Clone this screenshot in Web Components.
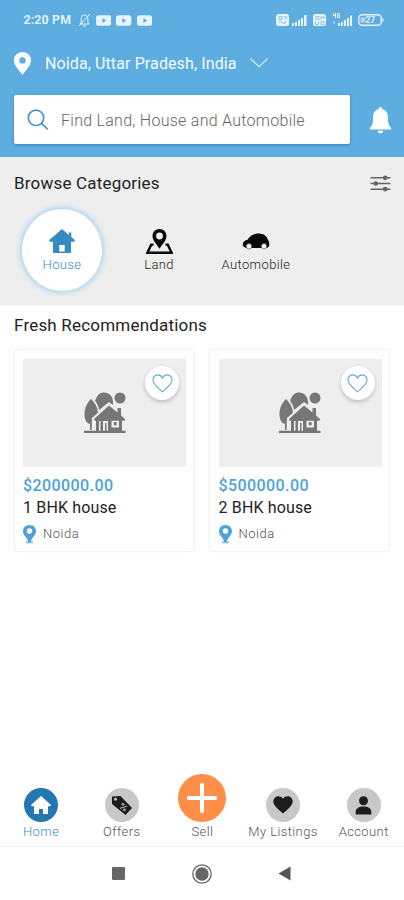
<!DOCTYPE html>
<html lang="en">
<head>
<meta charset="utf-8">
<title>Marketplace</title>
<style>
html,body{margin:0;padding:0;background:#fff}
body{font-family:Roboto,"Liberation Sans",sans-serif;width:404px;height:900px;overflow:hidden}
</style>
</head>
<body>
<market-app></market-app>
<script>
const define = (name, css, html) => customElements.define(name, class extends HTMLElement {
  constructor() {
    super();
    const view = typeof html === 'function' ? html(this) : html;
    this.attachShadow({mode: 'open'}).innerHTML = `<style>*{box-sizing:border-box}svg{display:block;flex:none}${css}</style>${view}`;
  }
});

const icons = {
  house: ['0 0 26 24', '<path fill="currentColor" fill-rule="evenodd" d="M13 0 0 11.200l1 1.500H4V24h18V12.700h3L26 11.200l-3.700-3.200V3.500h-2.300v2.600zM10.300 16h5.400v6.500h-5.400z"/>'],
  land: ['0 0 26 24', '<path fill="currentColor" fill-rule="evenodd" d="M13 0C9 0 6.300 2.900 6.300 6.600 6.300 11 10 14 13 19c3-5 6.700-8 6.700-12.400C19.700 2.900 17 0 13 0zm0 3.400a3.300 3.300 0 1 1 0 6.600 3.300 3.300 0 0 1 0-6.600z"/><path d="M7.300 15H5L1.400 22.800h23.200L21 15h-2.300" fill="none" stroke="currentColor" stroke-width="2.300"/>'],
  car: ['0 0 28 17', '<path fill="currentColor" d="M.8 11.500C1 8.500 3 7.300 5.500 6.800 8 3 11 .6 16 .6c5.500 0 8.400 2 10 6.400 1.300 1.200 1.500 4 1 6.500l-2 1.500H4L.8 13z"/><circle cx="7" cy="13.300" r="2.700" fill="#f4f4f4" stroke="#333" stroke-width=".5"/><circle cx="22" cy="13.300" r="2.700" fill="#f4f4f4" stroke="#333" stroke-width=".5"/>'],
  tag: ['0 0 22 22', '<path fill="currentColor" fill-rule="evenodd" d="M1 1.500 9.500 1 21 13.500 14.500 21 1 9.500zm3.500 1.400a1.500 1.500 0 1 0 0 3 1.500 1.500 0 0 0 0-3z"/><path d="m9 14 7-2.500" stroke="#aaa" stroke-width="1.300" fill="none"/><circle cx="12" cy="9.700" r="1.400" fill="#aaa"/><circle cx="13.400" cy="15.500" r="1.400" fill="#aaa"/>'],
  heart: ['0 0 20 18', '<path fill="currentColor" d="M10 17.600C5.500 13.500.3 9.800.3 5.600.3.200 7-1.700 10 2.700 13-1.700 19.700.2 19.700 5.600c0 4.200-5.200 7.900-9.700 12z"/>'],
  home: ['0 0 20 18', '<path fill="currentColor" d="M10 0 0 9l.8 1.300H3V18h5v-5h4v5h5v-7.700h2.200L20 9z"/>'],
  person: ['0 0 18 20', '<circle cx="9" cy="5" r="4.700" fill="currentColor"/><path fill="currentColor" d="M.7 19.500v-2.700C.7 13 4 11 9 11s8.300 2 8.300 5.800v2.700z"/>'],
  plus: ['0 0 28 28', '<path d="M14 1.800v24.400M1.800 14h24.400" stroke="currentColor" stroke-width="3.800" stroke-linecap="round"/>']
};

define('ui-icon', ':host{display:block;flex:none}', el => {
  const [box, body] = icons[el.getAttribute('name')];
  return `<svg width="${el.getAttribute('w')}" height="${el.getAttribute('h')}" viewBox="${box}" preserveAspectRatio="none">${body}</svg>`;
});

define('status-bar', `
:host{display:flex;height:40px;padding:0 20px 0 23.500px;align-items:center;color:#e6f4fd}
time{font-size:12.300px;font-weight:600;letter-spacing:.22px;width:54.500px;white-space:nowrap}
.l,.r{display:flex;align-items:center}.l{gap:5px}.r{margin-left:auto;gap:2px}`, `
<time>2:20 PM</time>
<div class="l">
<svg width="13" height="14" viewBox="0 0 13 14" fill="none" stroke="currentColor" stroke-width="1"><path d="M2 11h9L9.800 9V6c0-2.500-1.200-4-3.300-4S3.200 3.500 3.200 6v3zM5 12.800h3M1 13 12 1"/></svg>
${'<svg width="15.300" height="11" viewBox="0 0 16 11"><path fill="currentColor" fill-rule="evenodd" d="M3 0h10q3 0 3 3v5q0 3-3 3H3Q0 11 0 8V3q0-3 3-3zm3.700 3v5l4-2.500z"/></svg>'.repeat(3)}
</div>
<div class="r">
<svg width="13" height="12" viewBox="0 0 13 12"><rect width="13" height="12" rx="2.500" fill="currentColor"/><path d="M3 2.500h3v3H3zM8 2l2 3 1-3M2.500 8.500q2-2 3.500 0T10 8M8 10l2-3" stroke="#8cc5ea" fill="none"/></svg>
<svg width="17" height="12" viewBox="0 0 17 12" fill="currentColor"><path d="M1 9h2v3H1zM4 8h2v4H4zM7 6h2v6H7zM10 4h2v8h-2zM13 1h2.500v11H13z"/></svg>
<svg width="13" height="12" viewBox="0 0 13 12" style="margin-left:3px"><rect width="13" height="12" rx="2.500" fill="currentColor"/><path d="M3 2.500h3v3H3zM8 2v3l3-3v3M2.500 7.500v3h3v-3M8 7.500h3v3H8z" stroke="#8cc5ea" fill="none"/></svg>
<svg width="22" height="14" viewBox="0 0 22 14" fill="currentColor" style="margin-left:4px"><path d="M1 0v3h2v2h1V0H3v2H2V0zM5 0v5h3V2H6.700v1H7v1H6V1h2V0z"/><path d="M1 9l2-2v4H2z" opacity=".5"/><path d="M6 10h2v3H6zM9 9h2v4H9zM12 7h2v6h-2zM15 5h2v8h-2zM18 2.500h2V13h-2z"/></svg>
<svg width="26" height="12" viewBox="0 0 26 12" style="margin-left:2px"><rect x=".7" y=".7" width="22.600" height="10.600" rx="3.500" fill="none" stroke="currentColor" stroke-width="1.400"/><path d="M24.500 3.500v5l1.500-2.500z" fill="currentColor"/><path d="M2.500 3.500h5v5h-5z" fill="currentColor" opacity=".6"/><text x="7.500" y="9.200" font-size="8.500" font-weight="600" fill="currentColor" font-family="Roboto,sans-serif">27</text></svg>
</div>`);

define('location-row', `
:host{display:flex;align-items:center;height:46px;padding-left:14px;color:#f4faff;font-size:16px}
span{margin-left:14px;width:192px;white-space:nowrap;letter-spacing:.11px}
.c{margin-left:13px}`, `
<svg width="17" height="23" viewBox="0 0 17 23"><path fill="#fff" fill-rule="evenodd" d="M8.500 0C3.500 0 0 3.700 0 8.400 0 14 5.500 18 8.500 23 11.500 18 17 14 17 8.400 17 3.700 13.500 0 8.500 0zm0 5.200a3.200 3.200 0 1 1 0 6.400 3.200 3.200 0 0 1 0-6.400z"/></svg>
<span><slot></slot></span>
<svg class="c" width="18" height="10" viewBox="0 0 18 10" fill="none" stroke="#d5ecfa" stroke-width="1.200"><path d="m.5.7 8.500 8 8.500-8"/></svg>`);

define('search-row', `
:host{display:flex;align-items:center;padding:9px 12px 0 14px}
.box{display:flex;align-items:center;width:336px;height:49px;background:#fff;border-radius:2px;box-shadow:0 1px 3px #1c5f8e88;padding-left:13px;color:#666;font-size:16px;font-weight:300}
.box span{margin-left:12px;margin-top:1px;white-space:nowrap;letter-spacing:.27px}
.bell{margin-left:auto;margin-top:2px}`, `
<div class="box"><svg width="22" height="22" viewBox="0 0 22 22" fill="none" stroke="#4a96c8" stroke-width="1.700"><circle cx="9" cy="8.800" r="7.700"/><path d="m14.500 14.300 6.300 6"/></svg><span><slot></slot></span></div>
<svg class="bell" width="23" height="27" viewBox="0 0 23 28" fill="#fff"><path d="M11.500 0c1.200 0 1.800.9 1.800 2.100 4 .9 5.900 4.400 5.900 8.400 0 6.500 1 8.800 3.300 11v1.800H.5v-1.800c2.300-2.200 3.300-4.500 3.300-11 0-4 1.900-7.500 5.900-8.400C9.700.9 10.300 0 11.500 0zM8.700 24.500h5.600c0 3.700-5.600 3.700-5.600 0z"/></svg>`);

define('category-item', `
:host{display:flex;flex-direction:column;align-items:center;justify-content:center;width:97px;height:84px;color:#090909}
.disc{display:flex;flex-direction:column;align-items:center;width:80px;height:82px;padding-top:19px;border-radius:50%;white-space:nowrap}
.ic{height:26px;display:flex;align-items:center}
.t{font-size:13px;line-height:15px;margin-top:3px;color:#222;font-weight:300;letter-spacing:.38px}
:host([active]){color:#348bc3}
:host([active]) .disc{background:#fff;box-shadow:0 0 6px 1px #93cdf0}
:host([active]) .t{color:#2f8fcb}`, el => `
<div class="disc"><div class="ic"><ui-icon name="${el.getAttribute('icon')}" w="${el.getAttribute('w')}" h="${el.getAttribute('h')}"></ui-icon></div><div class="t"><slot></slot></div></div>`);

define('category-panel', `
:host{display:block;height:148px;background:#eee;padding-top:14px}
header{display:flex;align-items:center;justify-content:space-between;padding:0 13px 0 14px;height:23px;font-size:17px;color:#222;letter-spacing:.19px}
header svg{margin-top:2px}
.row{display:flex;padding-left:13.500px;margin-top:14px}`, `
<header><span>Browse Categories</span><svg width="21" height="17" viewBox="0 0 22 18" fill="#666" stroke="#666" stroke-width="1.600"><path d="M.5 3h21M.5 9h21M.5 15h21"/><g stroke="none"><circle cx="16" cy="3" r="2.500"/><circle cx="6" cy="9" r="2.500"/><circle cx="16" cy="15" r="2.500"/></g></svg></header>
<div class="row">
<category-item active icon="house" w="26" h="24">House</category-item>
<category-item icon="land" w="27" h="25">Land</category-item>
<category-item icon="car" w="28" h="17">Automobile</category-item>
</div>`);

define('listing-card', `
:host{display:block;width:181px;height:203px;background:#fff;border:1px solid #f3f3f3;border-radius:4px;box-shadow:0 0 2px #0000000c;padding:9px 9px 0 8.500px}
.pic{position:relative;height:108px;width:163px;background:#eee;display:flex;justify-content:center;padding-top:33px}
.fav{position:absolute;right:7px;top:7px;width:34px;height:34px;border-radius:50%;background:#fff;box-shadow:0 2px 4px #0003;display:grid;place-items:center}
.p{font-size:16px;font-weight:500;color:#4da3d9;line-height:20px;margin-top:9px;letter-spacing:.42px}
.n{font-size:16px;color:#222;line-height:22px;margin-top:1px;letter-spacing:.15px}
.l{display:flex;align-items:center;font-size:13px;font-weight:300;color:#555;margin-top:5px;gap:7px;line-height:20px;letter-spacing:.5px}`, `
<div class="pic">
<svg width="42" height="42" viewBox="0 0 42 42"><g fill="#777"><path d="M7 7c5 5 7 10 7 14l-6 6-.4 11H6V32C2 31 .5 27 .5 22 .5 16 3 11 7 7z"/><path d="M11 9C13 3 16 .5 20 .5c5 0 9 4 9 9.500v3L25 10l-10 8c-.5-4-2-7-4-9z"/><circle cx="36" cy="6" r="5.500"/><path d="M10 27 25 13.500l8.500 7V16H37v7.500l4.500 4-1.500 1.300H11z"/><path fill-rule="evenodd" d="M12 27h26v12H12zm3 2v10h1.500V29zm4 0v10h5V29zm8.500-1v7.500H35V28z"/><path d="M0 38.700h41.500V41H0z"/></g><path d="M21 31h1.500v8H21zM29.700 30.200h3v3h-3z" fill="#777"/><path d="m8 27 17-15 5 4" fill="none" stroke="#eee" stroke-width="1.500"/></svg>
<div class="fav"><svg width="21" height="19" viewBox="0 0 22 20" fill="none" stroke="#65add8" stroke-width="1.200"><path d="M11 18.800C6 14 1 10.500 1 6.200.9 1 8-1.300 11 4.200 14-1.300 21.100 1 21 6.200c0 4.300-5 7.800-10 12.600z"/></svg></div>
</div>
<div class="p"><slot name="price"></slot></div>
<div class="n"><slot></slot></div>
<div class="l"><svg width="13" height="19" viewBox="0 0 13 19" fill="#4da3d9"><path fill-rule="evenodd" d="M6.500 0C2.500 0 0 2.800 0 6.300 0 10 3.500 12 5 16v1h3v-1c1.500-4 5-6 5-9.700C13 2.800 10.500 0 6.500 0zm0 3.300a2.700 2.700 0 1 1 0 5.400 2.700 2.700 0 0 1 0-5.400z"/><path d="M3 16.500h7v1.800H3z" opacity=".7"/></svg><slot name="place"></slot></div>`);

define('nav-item', `
:host{display:flex;flex-direction:column;align-items:center;justify-content:flex-end;width:80.800px;height:70px;color:#1c1c1c;white-space:nowrap}
.d{width:34px;height:34px;border-radius:50%;background:#c8c8c8;display:grid;place-items:center}
.t{font-size:13px;line-height:16px;margin-top:2px;color:#555;font-weight:300;letter-spacing:.4px}
:host([active]){color:#fff}:host([active]) .d{background:#2478b1}:host([active]) .t{color:#2f8fcb}
:host([sell]){color:#fff}:host([sell]) .d{width:48px;height:48px;background:#ff8e48}`, el => `
<div class="d"><ui-icon name="${el.getAttribute('icon')}" w="${el.getAttribute('w')}" h="${el.getAttribute('h')}"></ui-icon></div><div class="t"><slot></slot></div>`);

define('bottom-nav', `
:host{display:flex;height:77px;padding:0 0 7px .8px;border-bottom:1px solid #f1f1f1;justify-content:center}`, `
<nav-item active icon="home" w="20" h="18">Home</nav-item>
<nav-item icon="tag" w="22" h="21">Offers</nav-item>
<nav-item sell icon="plus" w="30" h="30">Sell</nav-item>
<nav-item icon="heart" w="20" h="18">My Listings</nav-item>
<nav-item icon="person" w="17" h="19">Account</nav-item>`);

define('system-nav', `
:host{display:flex;height:53px;align-items:center;padding-left:112px;gap:67px}`, `
<svg width="13" height="13" viewBox="0 0 13 13"><rect width="13" height="13" rx="1" fill="#666"/></svg>
<svg width="20" height="20" viewBox="0 0 20 20"><circle cx="10" cy="10" r="9.200" fill="none" stroke="#666" stroke-width="1.300"/><circle cx="10" cy="10" r="6.700" fill="#666"/></svg>
<svg width="13" height="15" viewBox="0 0 13 15" style="margin-left:-1px"><path d="M12.500.5v14L.5 7.500z" fill="#555"/></svg>`);

define('market-app', `
:host{display:flex;flex-direction:column;width:404px;height:900px;background:#fff}
.top{height:157px;background:#5dade1}
h2{margin:0;font-size:17px;font-weight:400;color:#222;line-height:22px;padding:9px 14px 13px;letter-spacing:.2px}
.cards{display:flex;gap:14.500px;padding-left:13.500px}
bottom-nav{margin-top:auto}`, `
<div class="top"><status-bar></status-bar><location-row>Noida, Uttar Pradesh, India</location-row><search-row>Find Land, House and Automobile</search-row></div>
<category-panel></category-panel>
<h2>Fresh Recommendations</h2>
<div class="cards">
<listing-card><span slot="price">$200000.00</span>1 BHK house<span slot="place">Noida</span></listing-card>
<listing-card><span slot="price">$500000.00</span>2 BHK house<span slot="place">Noida</span></listing-card>
</div>
<bottom-nav></bottom-nav><system-nav></system-nav>`);
</script>
</body>
</html>
